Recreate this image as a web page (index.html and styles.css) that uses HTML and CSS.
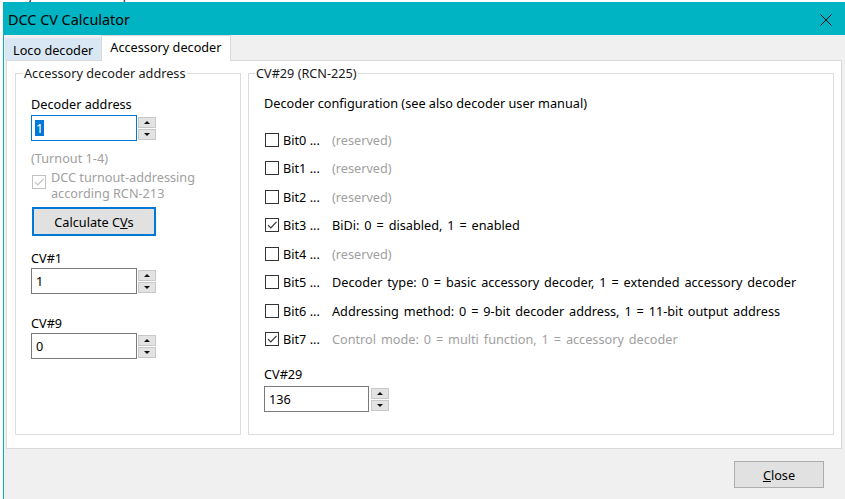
FILE: index.html
```html
<!DOCTYPE html>
<html>
<head>
<meta charset="utf-8">
<title>DCC CV Calculator</title>
<link rel="stylesheet" href="styles.css">
</head>
<body>
<div class="desktop">
  <span class="desk-item">Settings</span>
  <span class="desk-item">Firmware Update</span>
</div>
<div class="window">
  <div class="titlebar">
    <span class="title">DCC CV Calculator</span>
    <svg class="close-x" width="12" height="12" viewBox="0 0 12 12"><path d="M0.5 0.5 L11.5 11.5 M11.5 0.5 L0.5 11.5" stroke="#111" stroke-width="1" fill="none"/></svg>
  </div>
  <div class="client">
    <div class="tabs">
      <div class="tab">Loco decoder</div>
      <div class="tab active">Accessory decoder</div>
    </div>
    <div class="panel">
      <div class="group group-left">
        <span class="legend">Accessory decoder address</span>
        <div class="lbl lbl-addr">Decoder address</div>
        <div class="spin spin-addr">
          <div class="spin-input focused"><span class="sel">1</span></div>
          <div class="spin-btns"><span class="sbtn"><i class="tri up"></i></span><span class="sbtn"><i class="tri down"></i></span></div>
        </div>
        <div class="lbl muted lbl-turnout">(Turnout 1-4)</div>
        <div class="check-multi">
          <span class="cb disabled checked"><svg width="12" height="12" viewBox="0 0 12 12"><path d="M2 6.2 L4.8 9 L10.5 2.8" stroke="#c2c2c2" stroke-width="1.2" fill="none"/></svg></span>
          <span class="muted multi-text">DCC turnout-addressing<br>according RCN-213</span>
        </div>
        <button class="btn btn-calc">Calculate C<u>V</u>s</button>
        <div class="lbl lbl-cv1">CV#1</div>
        <div class="spin spin-tight">
          <div class="spin-input">1</div>
          <div class="spin-btns"><span class="sbtn"><i class="tri up"></i></span><span class="sbtn"><i class="tri down"></i></span></div>
        </div>
        <div class="lbl lbl-cv9">CV#9</div>
        <div class="spin spin-tight">
          <div class="spin-input">0</div>
          <div class="spin-btns"><span class="sbtn"><i class="tri up"></i></span><span class="sbtn"><i class="tri down"></i></span></div>
        </div>
      </div>
      <div class="group group-right">
        <span class="legend">CV#29 (RCN-225)</span>
        <div class="lbl lbl-config">Decoder configuration (see also decoder user manual)</div>
        <div class="bits">
          <div class="bit"><span class="cb"></span><span class="bit-name">Bit0 ...</span><span class="desc muted">(reserved)</span></div>
          <div class="bit"><span class="cb"></span><span class="bit-name">Bit1 ...</span><span class="desc muted">(reserved)</span></div>
          <div class="bit"><span class="cb"></span><span class="bit-name">Bit2 ...</span><span class="desc muted">(reserved)</span></div>
          <div class="bit"><span class="cb checked"><svg width="12" height="12" viewBox="0 0 12 12"><path d="M2 6.2 L4.8 9 L10.5 2.8" stroke="#333" stroke-width="1.2" fill="none"/></svg></span><span class="bit-name">Bit3 ...</span><span class="desc">BiDi: 0 = disabled, 1 = enabled</span></div>
          <div class="bit"><span class="cb"></span><span class="bit-name">Bit4 ...</span><span class="desc muted">(reserved)</span></div>
          <div class="bit"><span class="cb"></span><span class="bit-name">Bit5 ...</span><span class="desc">Decoder type: 0 = basic accessory decoder, 1 = extended accessory decoder</span></div>
          <div class="bit"><span class="cb"></span><span class="bit-name">Bit6 ...</span><span class="desc">Addressing method: 0 = 9-bit decoder address, 1 = 11-bit output address</span></div>
          <div class="bit"><span class="cb checked"><svg width="12" height="12" viewBox="0 0 12 12"><path d="M2 6.2 L4.8 9 L10.5 2.8" stroke="#333" stroke-width="1.2" fill="none"/></svg></span><span class="bit-name">Bit7 ...</span><span class="desc muted">Control mode: 0 = multi function, 1 = accessory decoder</span></div>
        </div>
        <div class="lbl lbl-cv29">CV#29</div>
        <div class="spin spin-wide">
          <div class="spin-input">136</div>
          <div class="spin-btns"><span class="sbtn"><i class="tri up"></i></span><span class="sbtn"><i class="tri down"></i></span></div>
        </div>
      </div>
    </div>
    <div class="footer">
      <button class="btn btn-close"><u>C</u>lose</button>
    </div>
  </div>
</div>
</body>
</html>
```
FILE: styles.css
```css
* { box-sizing: border-box; }
html, body {
  margin: 0;
  width: 845px;
  height: 499px;
  overflow: hidden;
  background: #ffffff;
  font-family: "Noto Sans", "Open Sans", sans-serif;
  font-size: 12.7px;
  color: #000;
}
body { position: relative; }

.desktop {
  position: absolute;
  top: -11px;
  left: -8px;
  display: flex;
  gap: 20px;
  font-size: 12px;
  line-height: 14px;
  color: #222;
}

.window {
  position: absolute;
  left: 3px;
  top: 2px;
  width: 842px;
  height: 497px;
  border-left: 1px solid #00b4c3;
  background: #f0f0f0;
  display: flex;
  flex-direction: column;
}

.titlebar {
  height: 33px;
  flex: none;
  background: #00b4c3;
  display: flex;
  align-items: center;
  padding-left: 4px;
}
.title {
  font-size: 14.4px;
  color: #000;
  margin-top: 1px;
}
.close-x {
  margin-left: auto;
  margin-right: 13px;
  margin-top: 2px;
}

.client {
  flex: 1;
  display: flex;
  flex-direction: column;
}

.tabs {
  height: 25px;
  display: flex;
  align-items: flex-end;
  padding-left: 1px;
  position: relative;
  z-index: 2;
}
.tab {
  height: 22px;
  background: #d9e6f3;
  border: 1px solid #d9e6f3;
  border-bottom: none;
  padding: 0 7px;
  display: flex;
  align-items: center;
  line-height: 16px;
}
.tab.active {
  height: 26px;
  margin-bottom: -1px;
  background: #ffffff;
  border: 1px solid #d9d9d9;
  border-bottom: none;
  padding: 0 8px 3px 8px;
}

.panel {
  margin-left: 2px;
  width: 836px;
  height: 389px;
  flex: none;
  background: #ffffff;
  border: 1px solid #d9d9d9;
  padding: 12px 7px 13px 8px;
  display: flex;
  gap: 7px;
}

.group {
  position: relative;
  border: 1px solid #dcdcdc;
  display: flex;
  flex-direction: column;
  align-items: flex-start;
}
.group-left { width: 226px; padding-left: 15px; }
.group-right { flex: 1; padding-left: 15px; }

.legend {
  position: absolute;
  top: -9px;
  left: 7px;
  background: #fff;
  padding: 0 1px;
  line-height: 16px;
  color: #1a1a1a;
}
.group-right .legend { left: 6px; }

.lbl { line-height: 16px; }
.muted { color: #a0a0a0; }

.lbl-addr { margin-top: 22px; }
.spin-addr { margin-top: 3px; }
.lbl-turnout { margin-top: 9px; }
.lbl-cv1 { margin-top: 14px; }
.lbl-cv9 { margin-top: 21px; }
.spin-tight { margin-top: 2px; }
.lbl-config { margin-top: 21px; }
.lbl-cv29 { margin-top: 18.5px; }
.spin-wide { margin-top: 4px; }

.spin {
  display: flex;
  gap: 1px;
}
.spin-input {
  width: 106px;
  height: 26px;
  border: 1px solid #7a7a7a;
  background: #fff;
  padding-left: 4px;
  display: flex;
  align-items: center;
  line-height: 16px;
}
.spin-input.focused { border-color: #0078d7; }
.sel {
  background: #0078d7;
  color: #fff;
  padding: 0 1px;
  margin-left: -1px;
}
.spin-wide .spin-input { width: 105px; }
.spin-wide { gap: 2px; }

.spin-btns {
  display: flex;
  flex-direction: column;
  gap: 1px;
  margin-top: 2px;
}
.sbtn {
  width: 18px;
  height: 11px;
  background: #e3e3e3;
  border: 1px solid #c8c8c8;
  display: flex;
  align-items: center;
  justify-content: center;
}
.tri {
  display: block;
  width: 0;
  height: 0;
  border-left: 3px solid transparent;
  border-right: 3px solid transparent;
}
.tri.up { border-bottom: 3px solid #111; }
.tri.down { border-top: 3px solid #111; }

.cb {
  width: 14px;
  height: 14px;
  flex: none;
  border: 1px solid #333;
  background: #fff;
  display: flex;
  align-items: center;
  justify-content: center;
}
.cb.disabled { border-color: #c2c2c2; }

.check-multi {
  margin-top: 3px;
  margin-left: 1px;
  display: flex;
  align-items: flex-start;
  gap: 5px;
}
.multi-text { line-height: 16px; }
.check-multi .cb { margin-top: 6px; }

.btn {
  font-family: inherit;
  font-size: inherit;
  color: #000;
  background: #e1e1e1;
  border: 1px solid #adadad;
  padding: 0;
  line-height: 16px;
}
.btn-calc {
  margin-top: 6px;
  margin-left: 1px;
  width: 124px;
  height: 29px;
  border: 2px solid #0078d7;
}

.bits {
  margin-top: 20.5px;
  display: flex;
  flex-direction: column;
  gap: 12.5px;
}
.bit {
  height: 16px;
  display: flex;
  align-items: center;
  line-height: 16px;
  white-space: nowrap;
}
.bit .cb { margin-left: 1px; margin-right: 4px; }
.bit-name { width: 49px; }
.desc { word-spacing: 1.6px; }

.footer {
  flex: 1;
  display: flex;
  justify-content: flex-end;
  align-items: flex-start;
  padding-right: 21px;
}
.btn-close {
  margin-top: 12px;
  width: 90px;
  height: 27px;
}
```
